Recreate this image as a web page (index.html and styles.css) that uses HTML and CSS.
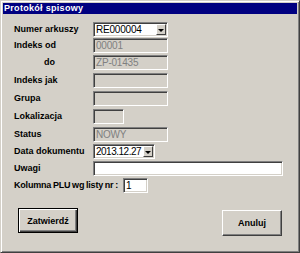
FILE: index.html
```html
<!DOCTYPE html>
<html lang="pl">
<head>
  <meta charset="UTF-8">
  <title>Protokół spisowy</title>
  <link rel="stylesheet" href="styles.css">
</head>
<body>

  <div class="window">
    <!-- Title bar -->
    <div class="titlebar">Protokół spisowy</div>

    <div class="content">
      <!-- Form fields -->
      <div class="form">
        <div class="lbl">Numer arkuszy</div>
        <div class="field combo w-wide"><span class="val">RE000004</span><span class="drop"></span></div>

        <div class="lbl">Indeks od</div>
        <div class="field disabled w-wide"><span class="val">00001</span></div>

        <div class="lbl lbl-do">do</div>
        <div class="field disabled w-wide"><span class="val">ZP-01435</span></div>

        <div class="lbl">Indeks jak</div>
        <div class="field disabled w-wide"></div>

        <div class="lbl">Grupa</div>
        <div class="field disabled w-wide"></div>

        <div class="lbl">Lokalizacja</div>
        <div class="field disabled w-small"></div>

        <div class="lbl">Status</div>
        <div class="field disabled w-wide"><span class="val">NOWY</span></div>

        <div class="lbl">Data dokumentu</div>
        <div class="field combo w-date"><span class="val tight">2013.12.27</span><span class="drop"></span></div>

        <div class="lbl">Uwagi</div>
        <div class="field w-full"></div>
      </div>

      <!-- PLU column row -->
      <div class="plu-row">
        <div class="lbl">Kolumna PLU wg listy nr :</div>
        <div class="field w-plu"><span class="val">1</span></div>
      </div>

      <!-- Buttons -->
      <div class="buttons">
        <button class="btn default">Zatwierdź</button>
        <button class="btn cancel">Anuluj</button>
      </div>
    </div>
  </div>

</body>
</html>
```

FILE: styles.css
```css
/* Page */
body {
  margin: 0;
  background: #d4d0c8;
  font-family: 'Liberation Sans', Arial, sans-serif;
}

/* Dialog window with classic 3D frame */
.window {
  width: 300px;
  height: 253px;
  box-sizing: border-box;
  background: #d4d0c8;
  border: 1px solid;
  border-color: #d4d0c8 #404040 #404040 #d4d0c8;
  box-shadow: inset 1px 1px 0 #fff, inset -1px -1px 0 #808080;
  padding: 2px;
}

/* Title bar */
.titlebar {
  height: 11px;
  line-height: 11px;
  background: #000080;
  color: #fff;
  font-size: 9px;
  font-weight: bold;
  padding-left: 1px;
  letter-spacing: 0.3px;
}

.content {
  padding: 8px 0 0 11px;
}

/* Form grid */
.form {
  display: grid;
  grid-template-columns: 79px auto;
  grid-template-rows: 16px 17px 18px 18px 18px 18px 17px 17px 17px;
  align-items: start;
}

.lbl {
  font-size: 9px;
  font-weight: bold;
  color: #000;
  height: 15px;
  line-height: 15px;
  white-space: nowrap;
}

.lbl-do {
  padding-left: 30px;
}

/* Sunken edit box */
.field {
  position: relative;
  box-sizing: border-box;
  height: 15px;
  background: #fff;
  border: 1px solid;
  border-color: #808080 #fff #fff #808080;
  box-shadow: inset 1px 1px 0 #404040, inset -1px -1px 0 #d4d0c8;
  font-size: 10px;
  line-height: 13px;
  color: #000;
  overflow: hidden;
}

.field .val {
  padding-left: 2px;
  letter-spacing: -0.2px;
}

.field .val.tight {
  letter-spacing: -0.5px;
}

.field.disabled {
  background: #d4d0c8;
  color: #808080;
}

.w-wide { width: 75px; }
.w-small { width: 31px; }
.w-date { width: 62px; }
.w-full { width: 190px; }
.w-plu { width: 25px; }

/* Dropdown button inside combo */
.drop {
  position: absolute;
  top: 1px;
  right: 1px;
  bottom: 1px;
  width: 10px;
  box-sizing: border-box;
  background: #d4d0c8;
  border: 1px solid;
  border-color: #fff #404040 #404040 #fff;
}

.drop::after {
  content: '';
  position: absolute;
  left: 1px;
  top: 4px;
  border-left: 3px solid transparent;
  border-right: 3px solid transparent;
  border-top: 3px solid #000;
}

/* PLU row */
.plu-row {
  display: flex;
  align-items: center;
  height: 15px;
}

.plu-row .lbl {
  width: 109px;
  letter-spacing: -0.2px;
  word-spacing: -0.5px;
}

/* Buttons */
.buttons {
  display: flex;
  justify-content: space-between;
  align-items: flex-start;
  margin-top: 15px;
  padding-left: 4px;
  width: 264px;
}

.btn {
  box-sizing: border-box;
  width: 60px;
  height: 26px;
  padding: 0;
  background: #d4d0c8;
  border: 1px solid;
  border-color: #fff #404040 #404040 #fff;
  box-shadow: inset -1px -1px 0 #808080;
  font-family: 'Liberation Sans', Arial, sans-serif;
  font-size: 9px;
  font-weight: bold;
  color: #000;
}

.btn.default {
  height: 25px;
  border: 1px solid #000;
  box-shadow: inset 1px 1px 0 #fff, inset -1px -1px 0 #404040, inset -2px -2px 0 #808080;
}

.btn.cancel {
  margin-top: 2px;
}
```
